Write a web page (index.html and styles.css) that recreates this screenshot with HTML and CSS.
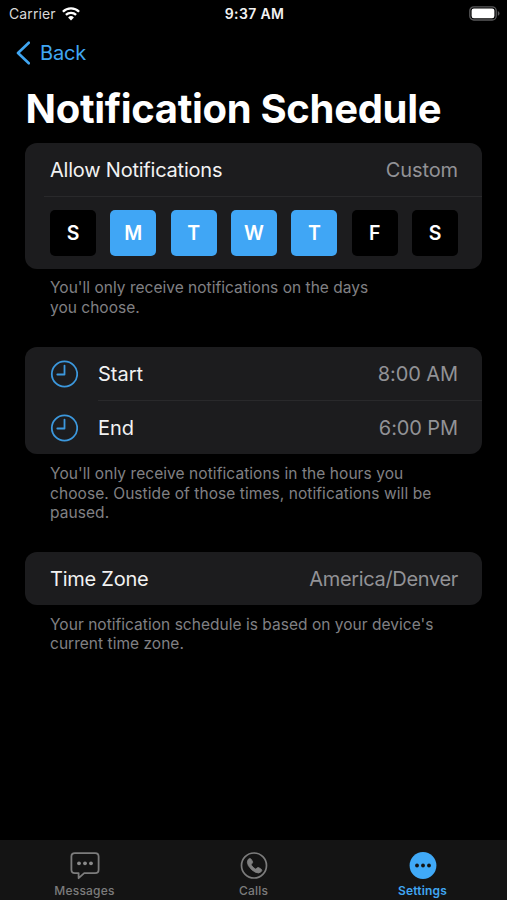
FILE: index.html
```html
<!DOCTYPE html>
<html lang="en">
<head>
<meta charset="utf-8">
<title>Notification Schedule</title>
<link rel="stylesheet" href="styles.css">
</head>
<body>
<div class="screen">
  <header class="status">
    <div class="status-left">
      <span class="carrier">Carrier</span>
      <svg class="wifi" width="18" height="14" viewBox="0 0 18 14" fill="none" stroke="#fff" stroke-width="2.3"><path d="M.9 4.7a11.5 11.5 0 0 1 16.2 0"/><path d="M3.9 7.9a7.2 7.2 0 0 1 10.2 0"/><path d="M6.1 10.5a4.1 4.1 0 0 1 5.8 0L9 13.4Z" fill="#fff" stroke="none"/></svg>
    </div>
    <span class="clock">9:37 AM</span>
    <div class="status-right">
      <svg width="31" height="15" viewBox="0 0 31 15"><rect x=".8" y=".8" width="26.4" height="13.2" rx="4" fill="none" stroke="#59595b" stroke-width="1.3"/><rect x="2.6" y="2.6" width="22.8" height="9.6" rx="2.2" fill="#fff"/><path d="M28.8 5v4.8q1.7-.8 1.7-2.4T28.800 5Z" fill="#59595b"/></svg>
    </div>
  </header>
  <nav class="nav">
    <svg class="chevron" width="14" height="24" viewBox="0 0 14 24" fill="none" stroke="#40a6f2" stroke-width="2.6" stroke-linecap="round" stroke-linejoin="round"><path d="M12.800 1.700 2 12l10.800 10.300"/></svg>
    <span class="back">Back</span>
  </nav>
  <h1 class="title">Notification Schedule</h1>
  <main class="content">
    <section class="group">
      <div class="card card-days">
        <div class="row"><span class="allow">Allow Notifications</span><span class="value custom">Custom</span></div>
        <div class="line line-days"></div>
        <div class="days">
          <span class="day">S</span><span class="day on">M</span><span class="day on">T</span><span class="day on">W</span><span class="day on">T</span><span class="day">F</span><span class="day">S</span>
        </div>
      </div>
      <p class="note">You'll only receive notifications on the days<br>you choose.</p>
    </section>
    <section class="group">
      <div class="card card-hours">
        <div class="row row-start">
          <svg class="icon" width="28" height="28" viewBox="0 0 28 28" fill="none" stroke="#3c98dd" stroke-width="1.800" stroke-linecap="round" stroke-linejoin="round"><circle cx="14.500" cy="14" r="12.700"/><path d="M14.500 5.600V14.500H7.300"/></svg>
          <span class="start">Start</span><span class="value time">8:00 AM</span>
        </div>
        <div class="line line-hours"></div>
        <div class="row row-end">
          <svg class="icon" width="28" height="28" viewBox="0 0 28 28" fill="none" stroke="#3c98dd" stroke-width="1.800" stroke-linecap="round" stroke-linejoin="round"><circle cx="14.500" cy="14" r="12.700"/><path d="M14.500 5.600V14.500H7.300"/></svg>
          <span class="end">End</span><span class="value time">6:00 PM</span>
        </div>
      </div>
      <p class="note note-hours">You'll only receive notifications in the hours you<br>choose. Oustide of those times, notifications will be<br>paused.</p>
    </section>
    <section class="group">
      <div class="card card-zone">
        <div class="row"><span class="zone">Time Zone</span><span class="value place">America/Denver</span></div>
      </div>
      <p class="note note-zone">Your notification schedule is based on your device's<br>current time zone.</p>
    </section>
  </main>
  <footer class="tabs">
    <div class="tab">
      <svg width="30" height="28" viewBox="0 0 30 28"><path d="M4.800 1.100h20.400q3.400 0 3.400 3.400v13.200q0 3.400-3.400 3.400H14.200L8.600 26.200V21.100H4.800q-3.400 0-3.400-3.400V4.500q0-3.400 3.400-3.400Z" fill="none" stroke="#7c7c7c" stroke-width="1.800" stroke-linejoin="round"/><g fill="#8a8a8a"><circle cx="9" cy="11.300" r="1.900"/><circle cx="15" cy="11.300" r="1.900"/><circle cx="21" cy="11.300" r="1.900"/></g></svg>
      <span>Messages</span>
    </div>
    <div class="tab">
      <svg width="28" height="28" viewBox="0 0 28 28"><circle cx="14" cy="13.500" r="12.500" fill="none" stroke="#7c7c7c" stroke-width="1.700"/><path d="M8.200 7.400q1.500-1.700 2.700-.5l1.500 2.300q.7 1.100-.2 2l-.8.900q-.3.500.1 1.200 1.500 2.300 3.500 3.500.7.400 1.100 0l.9-.8q.9-.9 2-.2l2.300 1.500q1.100.9 0 2.200-2.200 2.600-6 .7-4.300-2.200-6.900-6.500-2-3.800-.2-6.300Z" fill="#808080" stroke="#808080" stroke-width=".8" stroke-linejoin="round"/></svg>
      <span>Calls</span>
    </div>
    <div class="tab active">
      <svg width="28" height="28" viewBox="0 0 28 28"><circle cx="14" cy="13.500" r="13.400" fill="#40a9f7"/><g fill="#141414"><circle cx="8" cy="13.500" r="1.900"/><circle cx="14" cy="13.500" r="1.900"/><circle cx="20" cy="13.500" r="1.900"/></g></svg>
      <span>Settings</span>
    </div>
  </footer>
</div>
</body>
</html>
```

FILE: styles.css
```css
* { box-sizing: border-box; }
body { margin: 0; background: #000; }
svg { display: block; flex: none; }
.screen {
  width: 507px; height: 900px; overflow: hidden;
  display: flex; flex-direction: column;
  background: #000; color: #f2f2f2;
  font-family: Inter, "Liberation Sans", sans-serif;
  font-size: 20px; white-space: nowrap;
}
.status {
  height: 27px; padding: 0 7px 0 9px;
  display: grid; grid-template-columns: 1fr auto 1fr; align-items: center;
  font-size: 14px; line-height: 27px;
}
.status-left { display: flex; align-items: center; gap: 6px; }
.carrier { color: #d8d8d8; letter-spacing: .1px; }
.clock { font-weight: 600; letter-spacing: .35px; }
.status-right { display: flex; justify-content: flex-end; }
.nav { height: 50px; padding: 1px 16px 0; display: flex; align-items: center; gap: 10px; color: #40a6f2; }
.back { letter-spacing: -.2px; }
.title {
  margin: 0; height: 65.500px; padding-left: 25.500px;
  font-size: 40px; line-height: 64px; font-weight: 700; letter-spacing: -.32px; color: #fff;
}
.content { flex: 1; padding: 0 25px; }
.card { background: #1c1c1e; border-radius: 12px; }
.card-days { height: 126.500px; }
.card-hours { height: 107px; }
.card-zone { height: 53px; }
.group { height: 204.500px; }
.row { height: 53px; padding: 2px 24px 0 25px; display: flex; align-items: center; }
.row-start, .row-end { padding-top: 0; }
.allow { letter-spacing: -.22px; }
.zone { letter-spacing: -.25px; }
.value { margin-left: auto; color: #929296; }
.custom { letter-spacing: -.1px; }
.time { letter-spacing: -.1px; }
.place { letter-spacing: -.33px; }
.icon { margin-right: 20px; }
.line { height: 1px; background: #29292b; }
.line-days { margin-left: 19px; }
.line-hours { margin-left: 73px; }
.days { display: flex; justify-content: space-between; padding: 13.500px 24px 0 25px; }
.day {
  width: 46px; height: 46px; border-radius: 5px; background: #000; color: #fff;
  display: flex; align-items: center; justify-content: center; font-weight: 600; font-size: 19.500px;
}
.on { background: #40a6f5; }
.note { margin: 9px 0 0 25px; font-size: 15.500px; line-height: 19.700px; color: #808084; letter-spacing: .02px; }
.note-hours { margin-top: 10px; letter-spacing: .07px; }
.note-zone { margin-top: 10px; letter-spacing: .03px; }
.tabs { height: 60px; background: #141414; display: grid; grid-template-columns: repeat(3, 1fr); color: #7c7c7c; }
.tab { padding-top: 12px; display: flex; flex-direction: column; align-items: center; font-size: 12px; line-height: 15px; font-weight: 500; gap: 3px; letter-spacing: .2px; }
.active { color: #40a6f2; font-weight: 600; }
```
